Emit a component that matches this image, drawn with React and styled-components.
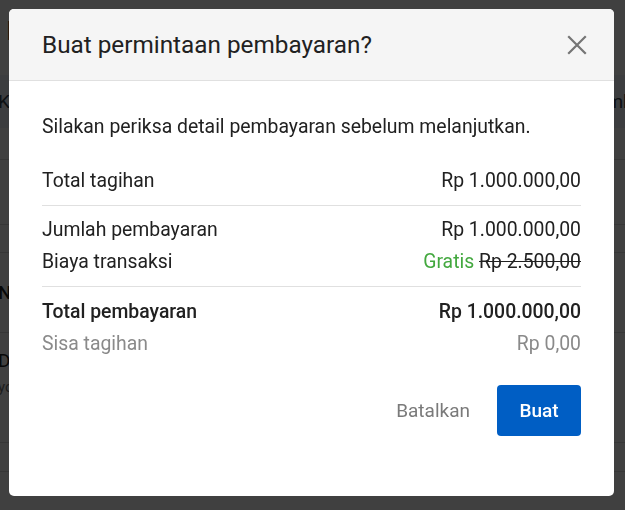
import styled, { createGlobalStyle } from 'styled-components';

const GlobalStyle = createGlobalStyle`
    html, body {
        margin: 0;
        padding: 0;
        background: #ffffff;
        font-family: Roboto, "Liberation Sans", sans-serif;
    }
    * {
        box-sizing: border-box;
    }
`;

export default function App() {
    return (
        <>
            <GlobalStyle />
            <Page>
                <PageTitle>Detail tagihan klient</PageTitle>
                <TableHead>
                    <span>Kategori</span>
                    <span>Pembayaran</span>
                </TableHead>
                <TableRow $height={32} />
                <TableRow $height={65} />
                <TableRow $height={28} />
                <TableRow $height={80}>
                    <strong>Nama</strong>
                    <strong>nbnb</strong>
                </TableRow>
                <TableRow $height={110}>
                    <DocCell>
                        <span>Dokumen</span>
                        <small>yo</small>
                    </DocCell>
                    <DocCell>
                        <span>1.000</span>
                        <small>PT</small>
                    </DocCell>
                </TableRow>
                <TableRow $height={29} />
            </Page>

            <Overlay>
                <Modal>
                    <ModalHeader>
                        <h2>Buat permintaan pembayaran?</h2>
                        <CloseButton aria-label="Tutup">
                            <svg width="20" height="20" viewBox="0 0 20 20">
                                <path
                                    d="M2 2 L18 18 M18 2 L2 18"
                                    stroke="#757575"
                                    strokeWidth="2.2"
                                    strokeLinecap="square"
                                />
                            </svg>
                        </CloseButton>
                    </ModalHeader>

                    <ModalBody>
                        <Description>
                            Silakan periksa detail pembayaran sebelum melanjutkan.
                        </Description>

                        <Row>
                            <span>Total tagihan</span>
                            <span>Rp 1.000.000,00</span>
                        </Row>
                        <Divider />
                        <Row>
                            <span>Jumlah pembayaran</span>
                            <span>Rp 1.000.000,00</span>
                        </Row>
                        <Row>
                            <span>Biaya transaksi</span>
                            <span>
                                <Free>Gratis</Free> <s>Rp 2.500,00</s>
                            </span>
                        </Row>
                        <Divider $gap={9} />
                        <Row $bold>
                            <span>Total pembayaran</span>
                            <span>Rp 1.000.000,00</span>
                        </Row>
                        <Row $muted>
                            <span>Sisa tagihan</span>
                            <span>Rp 0,00</span>
                        </Row>
                    </ModalBody>

                    <ModalFooter>
                        <TextButton>Batalkan</TextButton>
                        <PrimaryButton>Buat</PrimaryButton>
                    </ModalFooter>
                </Modal>
            </Overlay>
        </>
    );
}

const Page = styled.div`
    height: 510px;
    overflow: hidden;
    margin-left: -160px;
    width: 840px;
    color: #212121;
`;

const PageTitle = styled.h1`
    margin: 0;
    padding: 16px 0 0 0;
    height: 75px;
    font-size: 26px;
    font-weight: 500;
    white-space: nowrap;
`;

const TableHead = styled.div`
    display: flex;
    justify-content: space-between;
    align-items: center;
    height: 53px;
    padding-left: 158px;
    background: #edf3fa;
    font-size: 19px;
    color: #3a4450;
    span:last-child {
        margin-right: -10px;
    }
`;

const TableRow = styled.div`
    display: flex;
    justify-content: space-between;
    align-items: center;
    height: ${(p) => p.$height}px;
    padding-left: 158px;
    border-bottom: 1px solid #dcdcdc;
    font-size: 19px;
    strong {
        font-weight: 500;
    }
    strong:last-child {
        margin-right: -30px;
    }
`;

const DocCell = styled.div`
    display: flex;
    flex-direction: column;
    gap: 6px;
    align-self: flex-start;
    padding-top: 16px;
    small {
        font-size: 15px;
        color: #757575;
    }
    &:last-child {
        margin-right: -30px;
    }
`;

const Overlay = styled.div`
    position: fixed;
    inset: 0;
    background: rgba(0, 0, 0, 0.75);
    padding: 9px 11px 14px 9px;
`;

const Modal = styled.div`
    background: #ffffff;
    border-radius: 5px;
    overflow: hidden;
    height: 487px;
    display: flex;
    flex-direction: column;
`;

const ModalHeader = styled.div`
    display: flex;
    align-items: center;
    justify-content: space-between;
    height: 72px;
    padding: 0 27px 0 33px;
    background: #f5f5f5;
    border-bottom: 1px solid #e0e0e0;
    h2 {
        margin: 0;
        font-size: 24.3px;
        font-weight: 400;
        color: #212121;
    }
`;

const CloseButton = styled.button`
    border: none;
    background: none;
    padding: 0;
    display: flex;
    cursor: pointer;
`;

const ModalBody = styled.div`
    padding: 30px 33px 0 33px;
    display: flex;
    flex-direction: column;
`;

const Description = styled.p`
    margin: 0 0 22px 0;
    font-size: 19.4px;
    line-height: 32px;
    color: #212121;
`;

const Row = styled.div`
    display: flex;
    justify-content: space-between;
    font-size: 19.4px;
    line-height: 32px;
    font-weight: ${(p) => (p.$bold ? 500 : 400)};
    color: ${(p) => (p.$muted ? '#8a8a8a' : '#212121')};
    s {
        color: #212121;
    }
`;

const Free = styled.span`
    color: #43a83f;
`;

const Divider = styled.hr`
    border: none;
    border-top: 1px solid #e0e0e0;
    margin: 8px 0 ${(p) => p.$gap || 8}px 0;
    width: 100%;
`;

const ModalFooter = styled.div`
    display: flex;
    justify-content: flex-end;
    align-items: center;
    gap: 27px;
    padding: 25px 33px 0 33px;
`;

const TextButton = styled.button`
    border: none;
    background: none;
    font-family: inherit;
    font-size: 19px;
    color: #7a7a7a;
    padding: 0;
    cursor: pointer;
`;

const PrimaryButton = styled.button`
    border: none;
    background: #005ec4;
    color: #ffffff;
    font-family: inherit;
    font-size: 19px;
    font-weight: 500;
    width: 84px;
    height: 51px;
    border-radius: 4px;
    cursor: pointer;
`;
